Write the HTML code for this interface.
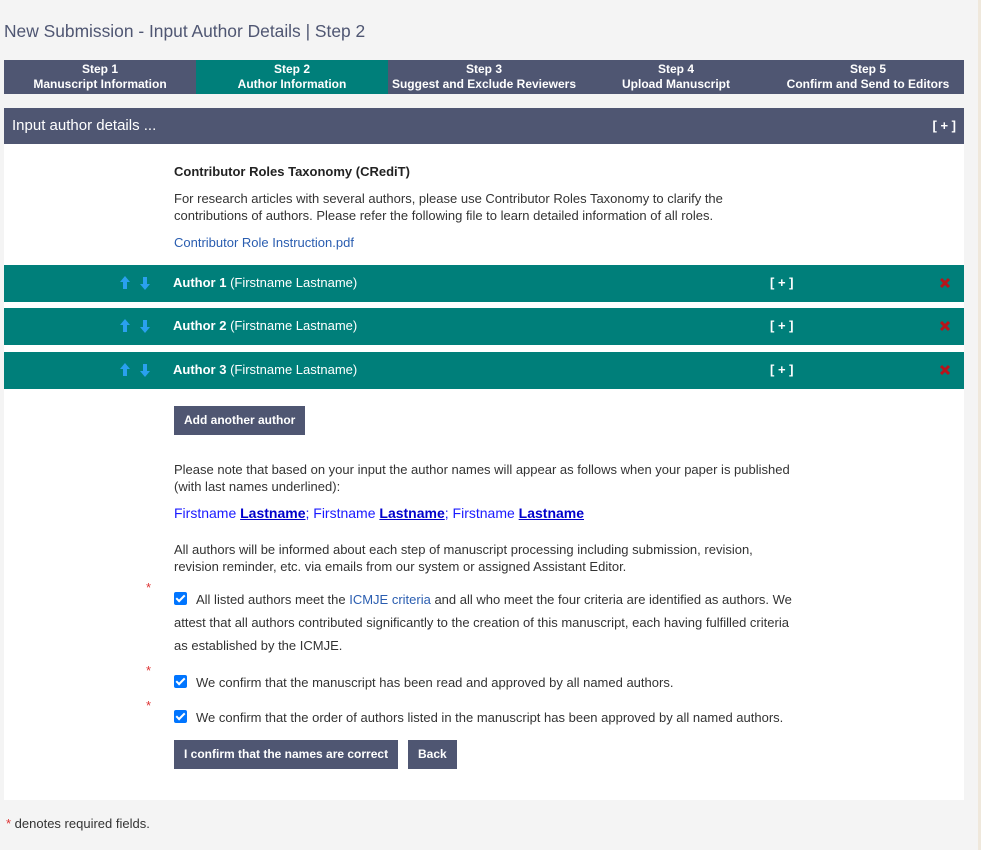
<!DOCTYPE html>
<html><head><style>
*{margin:0;padding:0;box-sizing:border-box}
body{width:981px;height:850px;background:#f4f4f4;font-family:"Liberation Sans",Arial,sans-serif;font-size:13px;color:#333;position:relative;overflow:hidden}
.a{position:absolute}
.rb{position:absolute;right:0;top:0;width:3px;height:850px;background:#efe8dc}
.title{left:4px;top:21px;font-size:17.4px;color:#4f5672}
.steps{left:4px;top:60px;width:960px;height:34px;background:#4f5672;display:flex}
.steps div{flex:1;color:#fff;font-weight:bold;font-size:12px;text-align:center;line-height:15px;padding-top:2px}
.steps .on{background:#007f7a}
.panel{left:4px;top:108px;width:960px;height:692px;background:#fff}
.hdr{left:4px;top:108px;width:960px;height:36px;background:#4f5672;color:#fff;font-size:15px;line-height:36px;padding-left:8px}
.hdr span{position:absolute;right:8px;font-weight:bold;font-size:13px}
.bar{left:4px;width:960px;height:37px;background:#007f7a;color:#fff;font-size:13px;line-height:36px}
.bar .n{position:absolute;left:169px}
.bar .p{position:absolute;left:766px;font-weight:bold}
.bar .x{position:absolute;left:935px;top:12px}
.bar .ar{position:absolute;left:115px;top:10px}
.btn{background:#4f5672;color:#fff;font-weight:bold;font-size:12px;height:29px;line-height:29px;padding:0 10px;position:absolute}
.t{left:174px;line-height:17px}
.lnk{color:#2a5db0}
.cb{position:absolute;left:174px;width:13px;height:13px;background:#0075ff;border-radius:2px}
.cb:after{content:"";position:absolute;left:4px;top:1px;width:3px;height:7px;border:solid #fff;border-width:0 2px 2px 0;transform:rotate(45deg)}
.st{position:absolute;left:146px;color:#d33;font-size:13px}
</style></head><body>
<div class="rb"></div>
<div class="a title">New Submission - Input Author Details | Step 2</div>
<div class="a steps"><div>Step 1<br>Manuscript Information</div><div class="on">Step 2<br>Author Information</div><div>Step 3<br>Suggest and Exclude Reviewers</div><div>Step 4<br>Upload Manuscript</div><div>Step 5<br>Confirm and Send to Editors</div></div>
<div class="a panel"></div>
<div class="a hdr">Input author details ...<span>[ + ]</span></div>
<div class="a t" style="top:163px;font-weight:bold;color:#222">Contributor Roles Taxonomy (CRediT)</div>
<div class="a t" style="top:190px">For research articles with several authors, please use Contributor Roles Taxonomy to clarify the<br>contributions of authors. Please refer the following file to learn detailed information of all roles.</div>
<div class="a t lnk" style="top:234px">Contributor Role Instruction.pdf</div>

<div class="a bar" style="top:265px"><svg class="ar" width="40" height="16"><path d="M6 1L1 7h3v7h4V7h3z" fill="#2aa0ee"/><path d="M26 15l5-6h-3V2h-4v7h-3z" fill="#2aa0ee"/></svg><span class="n"><b>Author 1</b> (Firstname Lastname)</span><span class="p">[ + ]</span><svg class="x" width="12" height="12"><path d="M2 2L10 10M10 2L2 10" stroke="#b8141a" stroke-width="3"/></svg></div>
<div class="a bar" style="top:308px"><svg class="ar" width="40" height="16"><path d="M6 1L1 7h3v7h4V7h3z" fill="#2aa0ee"/><path d="M26 15l5-6h-3V2h-4v7h-3z" fill="#2aa0ee"/></svg><span class="n"><b>Author 2</b> (Firstname Lastname)</span><span class="p">[ + ]</span><svg class="x" width="12" height="12"><path d="M2 2L10 10M10 2L2 10" stroke="#b8141a" stroke-width="3"/></svg></div>
<div class="a bar" style="top:352px"><svg class="ar" width="40" height="16"><path d="M6 1L1 7h3v7h4V7h3z" fill="#2aa0ee"/><path d="M26 15l5-6h-3V2h-4v7h-3z" fill="#2aa0ee"/></svg><span class="n"><b>Author 3</b> (Firstname Lastname)</span><span class="p">[ + ]</span><svg class="x" width="12" height="12"><path d="M2 2L10 10M10 2L2 10" stroke="#b8141a" stroke-width="3"/></svg></div>

<div class="btn" style="left:174px;top:406px">Add another author</div>
<div class="a t" style="top:461px">Please note that based on your input the author names will appear as follows when your paper is published<br>(with last names underlined):</div>
<div class="a t" style="top:505px;color:#1a1aff;font-size:14px">Firstname <b style="text-decoration:underline;color:#0000cc">Lastname</b>; Firstname <b style="text-decoration:underline;color:#0000cc">Lastname</b>; Firstname <b style="text-decoration:underline;color:#0000cc">Lastname</b></div>
<div class="a t" style="top:541px">All authors will be informed about each step of manuscript processing including submission, revision,<br>revision reminder, etc. via emails from our system or assigned Assistant Editor.</div>
<span class="st" style="top:580px">*</span><span class="cb" style="top:592px"></span>
<div class="a" style="left:174px;top:588px;width:630px;line-height:23px;text-indent:22px">All listed authors meet the <span class="lnk">ICMJE criteria</span> and all who meet the four criteria are identified as authors. We attest that all authors contributed significantly to the creation of this manuscript, each having fulfilled criteria as established by the ICMJE.</div>
<span class="st" style="top:663px">*</span><span class="cb" style="top:675px"></span>
<div class="a" style="left:196px;top:675px">We confirm that the manuscript has been read and approved by all named authors.</div>
<span class="st" style="top:698px">*</span><span class="cb" style="top:710px"></span>
<div class="a" style="left:196px;top:710px">We confirm that the order of authors listed in the manuscript has been approved by all named authors.</div>
<div class="btn" style="left:174px;top:740px">I confirm that the names are correct</div>
<div class="btn" style="left:408px;top:740px">Back</div>
<div class="a" style="left:6px;top:816px"><span style="color:#d33">*</span> denotes required fields.</div>
</body></html>
